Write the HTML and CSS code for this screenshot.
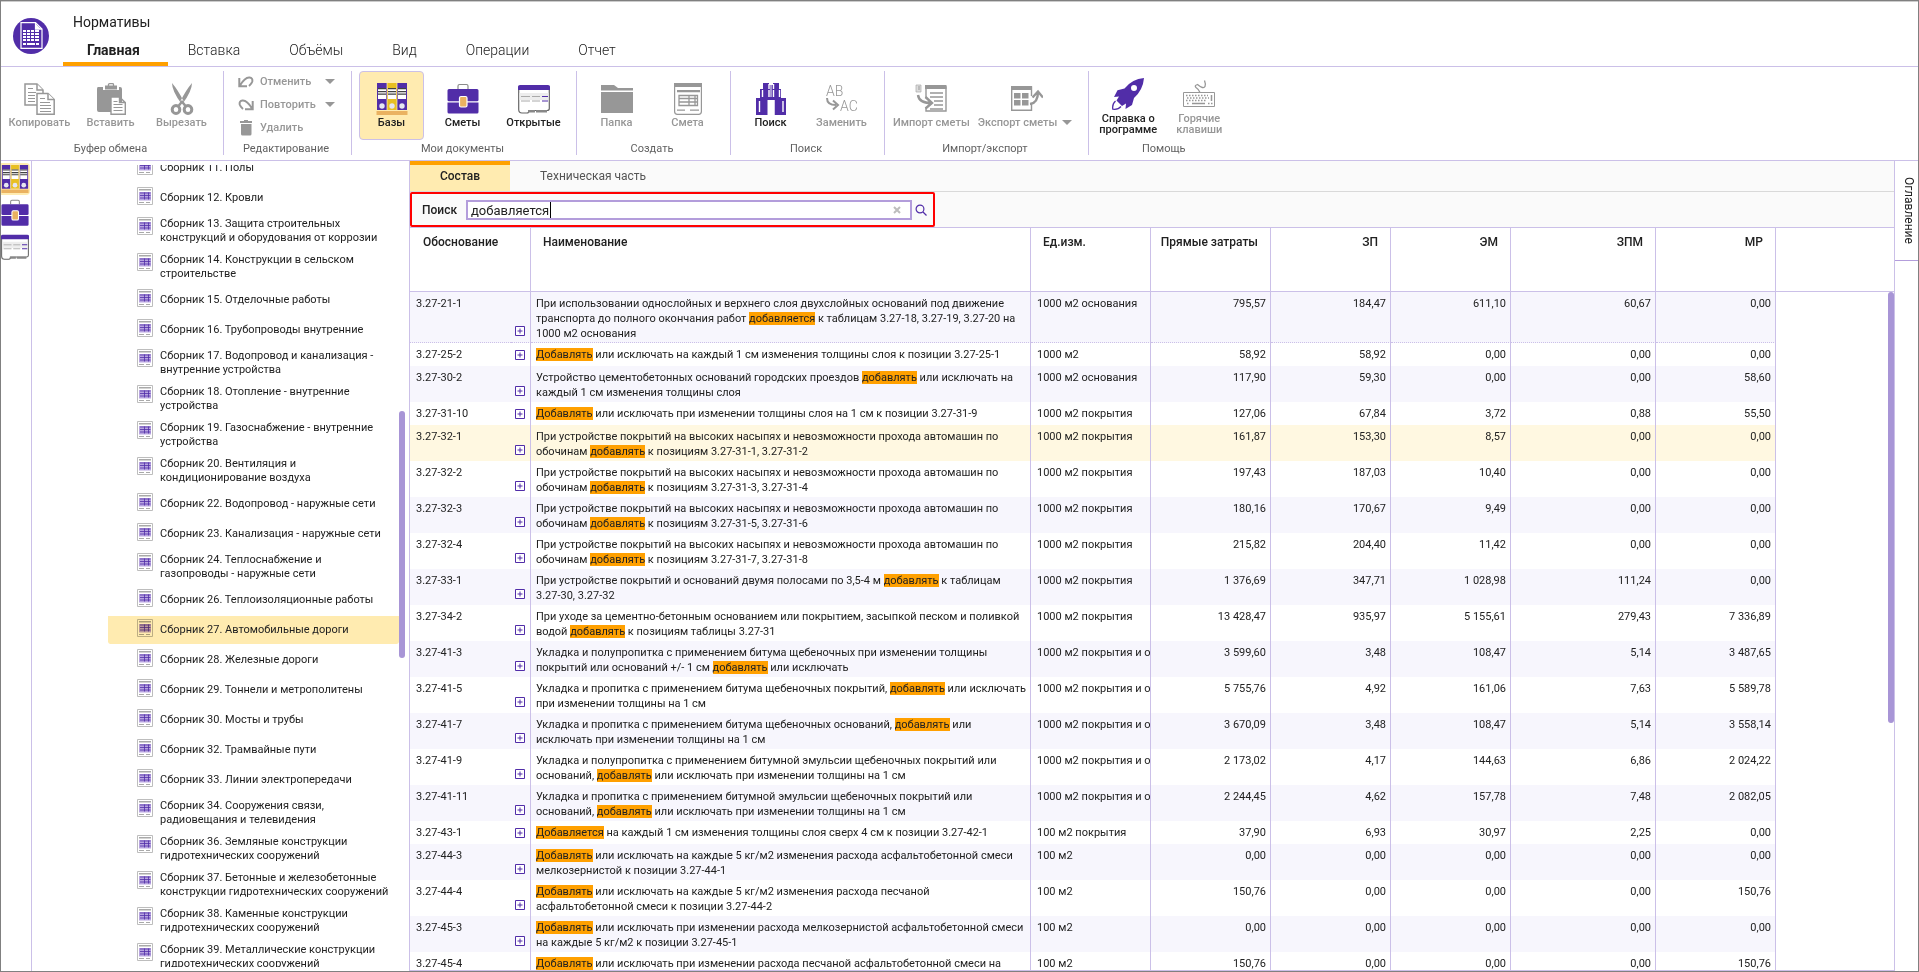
FILE: index.html
```
<!DOCTYPE html>
<html lang="ru">
<head>
<meta charset="utf-8">
<title>Нормативы</title>
<link rel="stylesheet" href="styles.css">
</head>
<body>
<svg class="sprite" aria-hidden="true">
  <symbol id="i-bases" viewBox="-1 0 32 32">
    <path fill="#512da8" d="M0 0h10v27H0zM20 0h10v27H20z"/>
    <path fill="#e8bf22" d="M10 0h10v27H10z"/>
    <path fill="#fff" d="M1 5h8v11H1zM11 5h8v11h-8zM21 5h8v11h-8z"/>
    <path stroke="#424242" stroke-width="1.3" d="M1 5.700h8M1 8.700h8M1 11.200h8M11 5.700h8M11 8.700h8M11 11.200h8M21 5.700h8M21 8.700h8M21 11.200h8"/>
    <path stroke="#fff1c8" stroke-width=".7" d="M10 0v27M20 0v27"/>
    <g fill="#e6e6f0"><circle cx="5" cy="23" r="2.700"/><circle cx="15" cy="23" r="2.700"/><circle cx="25" cy="23" r="2.700"/></g>
    <path fill="#eab261" d="M-.5 28h31v4h-31z"/>
  </symbol>
  <symbol id="i-case" viewBox="0 0 32 32">
    <path fill="none" stroke="#8a8a8a" stroke-width="1.2" d="M11 6V3q0-1.500 1.500-1.500h7Q21 1.500 21 3v3"/>
    <path fill="#512da8" d="M2 6h28q1.500 0 1.500 1.500V17q0 1.200-1.500 1.200H2Q.5 18.200.5 17V7.500Q.5 6 2 6zM.5 19.500h31V29q0 1.500-1.500 1.500H2Q.5 30.500.5 29z"/>
    <rect x="12.500" y="13.500" width="7.500" height="10.500" rx="1.500" fill="#eab261" stroke="#fff" stroke-width="1.200"/>
  </symbol>
  <symbol id="i-open" viewBox="0 0 32 32">
    <path fill="#fff" stroke="#666" stroke-width="1.200" d="M.7 4v22.500Q.7 30 4 30h5q2 0 2-2.500h18q2.300 0 2.300-2V4z"/>
    <path fill="#ededed" d="M1.500 10h29v7h-29z"/>
    <path fill="#512da8" d="M0 3.500Q0 2 2 2h28q2 0 2 1.500V7H0z"/>
    <path stroke="#aaa" d="M3 13.500h9M14 13.500h8M3 18h9M14 18h8"/>
    <path stroke="#512da8" stroke-width="1.200" d="M24 13.500h6M24 18h6"/>
    <path stroke="#888" stroke-width="2.500" d="M10 28.300h7M18 28.300h11"/>
  </symbol>
  <symbol id="i-copy" viewBox="0 0 32 32">
    <g fill="#fff" stroke="#979797" stroke-width="1.500"><path d="M1 1h12l6 6v15H1z"/><path d="M13 1v6h6"/><path d="M13 10.500h11l6.200 6v14.700H13z"/><path d="M24 10.500v6h6.200"/></g>
    <path stroke="#979797" stroke-width="1.200" d="M4 5.500h5M4 9.500h8M4 12.500h7M4 15.500h7M4 18.500h7M16 15.500h5M16 19.500h10M16 22.500h11M16 25.500h11M16 28.500h11"/>
  </symbol>
  <symbol id="i-paste" viewBox="0 0 32 32">
    <path fill="#979797" d="M3 4h5v3h16V4h1q2 0 2 2v23H4q-2 0-2-2V6q0-2 1-2z"/>
    <path fill="#979797" d="M10 2.500h12v4H10z"/><path fill="none" stroke="#979797" stroke-width="1.300" d="M13.500 3V1.500Q13.500.7 14.500.7h3q1 0 1 .8V3"/>
    <path fill="#fff" stroke="#979797" stroke-width="1.400" d="M16 14h8.500l5.800 5.500v11.700H16zM24.500 14v5.500h5.800"/>
    <path stroke="#979797" d="M18.500 18.500h4M18.500 21.500h9M18.500 24.500h9M18.500 27.500h9"/>
  </symbol>
  <symbol id="i-cut" viewBox="0 0 32 32">
    <path fill="#979797" d="M6 0q0 8 9.300 20.500l2.200-2.500Q12 7 6 0zM26 0q0 8-9.300 20.500l-2.200-2.500Q20 7 26 0z"/>
    <g fill="none" stroke="#979797" stroke-width="3"><ellipse cx="10" cy="26.500" rx="3.800" ry="4"/><ellipse cx="22" cy="26.500" rx="3.800" ry="4"/></g>
    <path stroke="#979797" stroke-width="2.500" d="M12.500 23l4-5M19.500 23l-4-5"/>
  </symbol>
  <symbol id="i-folder" viewBox="0 0 32 32"><path fill="#979797" d="M0 2h13l4 3h15v2.500H0zM0 9h32v21H0z"/></symbol>
  <symbol id="i-doc" viewBox="0 0 32 32">
    <path fill="#fff" stroke="#979797" stroke-width="1.200" d="M2.600 2v26.500q0 2.800 2.800 2.800h21.200q2.800 0 2.800-2.800V2z"/>
    <path fill="#979797" d="M2 0h28v4H2zM5 7h23v2.200H5zM5 26.500h8v1.200H5zM18 26.500h9v1.200h-9z"/>
    <path fill="none" stroke="#979797" stroke-width="1.300" d="M7 12.500h18.500v10H7zM7 15.500h18.500M7 19h18.500M17 12.500v10M23 12.500v10"/>
  </symbol>
  <symbol id="i-find" viewBox="0 0 32 32">
    <path fill="#512da8" d="M8 0h6v2h4V0h6v6h2v9h5v17H19.500V17h-7v15H1V15h4V6h3z"/>
    <path stroke="#fff" stroke-width="1.400" d="M14 1v5M18.500 1v5M7.500 7v7M14 7v7M18.500 7v7M24.500 7v7M4.500 18v11M28 18v11"/>
    <path fill="#fff" d="M13 17h6.500v15H13zM15.500 2h1v12h-1z"/><path stroke="#512da8" stroke-width="1.500" d="M11 5V2M21 5V2"/>
  </symbol>
  <symbol id="i-import" viewBox="0 0 32 32">
    <path fill="none" stroke="#979797" stroke-width="1.400" d="M11 15V4h20v24H11v-3"/><path fill="#979797" d="M10 2h21.500v4H10z"/>
    <path stroke="#979797" stroke-width="1.500" d="M15 10h13M15 14h13M19 18h9M19 22h9M15 26h13"/>
    <path fill="none" stroke="#979797" stroke-width="2.400" d="M3 12q1 8 13 8M10.500 14l6.500 6-6.500 5.500"/>
    <path fill="#ddd" stroke="#aaa" stroke-width=".7" d="M1 2h5v7H1z"/><path stroke="#888" stroke-width=".8" d="M3 4h2M3 6h2"/>
  </symbol>
  <symbol id="i-export" viewBox="0 0 32 32">
    <path fill="none" stroke="#979797" stroke-width="1.400" d="M20.500 13V4H.7v23.300h19.800V21"/><path fill="#979797" d="M0 3h21v4H0zM3 10h6.500v5.500H3zM11 10h6.500v5.500H11zM3 17h6.500v5.500H3zM11 17h6.500v5.500H11z"/>
    <path fill="none" stroke="#979797" stroke-width="2.400" d="M19 21q8-1 8-12M21.500 14.500L27 8.500l5 6"/>
  </symbol>
  <symbol id="i-rocket" viewBox="0 0 32 32">
    <path fill="#512da8" fill-rule="evenodd" d="M32 0Q20 1 12.500 10.500l-7 1.700L2 19l5-.5-2.500 4L10 28l4-2.500-.5 5.500 6.500-4 2-7Q31 12 32 0zM22 7a3 3 0 100 6 3 3 0 000-6z"/>
    <path fill="none" stroke="#512da8" stroke-width="1.300" d="M3.500 23Q0 26 .8 31.200 6 32 9 28.500"/>
  </symbol>
  <symbol id="i-keys" viewBox="0 0 32 32">
    <path fill="none" stroke="#979797" d="M.5 14.500h31v14H.5z"/><path fill="none" stroke="#979797" stroke-width="1.300" d="M17 14.500q-1-3-4-5-2-2 1.500-3 6 5 7.500 2 1-2-.5-6"/>
    <path fill="none" stroke="#979797" stroke-width="1.500" stroke-dasharray="1.500 1.500" d="M3 17.500h22M4 20h22M3 22.500h20M4 25.500h3M25 25.500h5"/><path stroke="#979797" stroke-width="1.500" d="M9 25.500h13M28.500 17v6"/>
  </symbol>
  <symbol id="i-undo" viewBox="0 0 16 16"><path fill="none" stroke="#979797" stroke-width="2" d="M1.300 4v8.200H9M2 11.500Q7 3 11.500 3.500 15 4 14.300 7.500 13.500 10 11 12"/></symbol>
  <symbol id="i-trash" viewBox="0 0 16 16"><path fill="#979797" d="M2 1h4V0h4v1h4v2H2zM3 4h10.500v10q0 1.500-1.500 1.500H4.500Q3 15.500 3 14z"/></symbol>
  <symbol id="i-book" viewBox="0 0 16 18">
    <path fill="#fff" stroke="#bdbdbd" d="M.5.5h15v17H.5z"/><path fill="#a9a9a9" d="M2 2h12v1.500H2zM2 15h5v1H2zM9 15h4v1H9z"/>
    <path fill="#b8a5e0" d="M2 5h12v8.500H2z"/><path fill="none" stroke="#512da8" stroke-width=".8" d="M3 6h10.500M3 8.500h10.500M3 11h10.500M7.500 5.500v7M11.500 5.500v7"/>
  </symbol>
  <symbol id="i-plus" viewBox="0 0 10 10"><path fill="#fff" stroke="#512da8" d="M.5.5h9v9h-9z"/><path stroke="#512da8" d="M2.500 5h5M5 2.500v5"/></symbol>
</svg>

<div class="window">
  <header class="header">
    <svg class="logo" viewBox="0 0 36 36" aria-hidden="true">
      <circle cx="18" cy="18" r="18" fill="#512da8"/>
      <path fill="none" stroke="#fff" stroke-width="1.200" d="M8 4.600h14.500l6.500 6.500v19.300H8zM22.500 4.600v6.500H29"/>
      <path fill="#fff" d="M10 12h16v11H10zM10 25h3v2h-3zM14 25h8v2h-8zM23 25h3v2h-3zM23 6l5 5h-5z"/>
      <path stroke="#512da8" d="M10 14.500h17M10 17.500h17M10 20.500h17M13.500 12v11M17.500 12v11M21.500 12v11"/>
    </svg>
    <div class="heading">
      <h1 class="title">Нормативы</h1>
      <nav class="tabs">
        <button class="tab tab-active">Главная</button><button class="tab">Вставка</button><button class="tab">Объёмы</button><button class="tab">Вид</button><button class="tab">Операции</button><button class="tab">Отчет</button>
      </nav>
    </div>
  </header>

  <div class="ribbon">
    <section class="group"><div class="tools">
      <button class="tool off"><svg><use href="#i-copy"/></svg><span>Копировать</span></button>
      <button class="tool off"><svg><use href="#i-paste"/></svg><span>Вставить</span></button>
      <button class="tool off"><svg><use href="#i-cut"/></svg><span>Вырезать</span></button>
    </div><p class="caption">Буфер обмена</p></section>
    <section class="group"><div class="edits">
      <button class="edit"><svg><use href="#i-undo"/></svg><span>Отменить</span><i class="caret"></i></button>
      <button class="edit redo"><svg><use href="#i-undo"/></svg><span>Повторить</span><i class="caret"></i></button>
      <button class="edit"><svg><use href="#i-trash"/></svg><span>Удалить</span></button>
    </div><p class="caption">Редактирование</p></section>
    <section class="group"><div class="tools">
      <button class="tool tool-active"><svg><use href="#i-bases"/></svg><span>Базы</span></button>
      <button class="tool"><svg><use href="#i-case"/></svg><span>Сметы</span></button>
      <button class="tool"><svg><use href="#i-open"/></svg><span>Открытые</span></button>
    </div><p class="caption">Мои документы</p></section>
    <section class="group"><div class="tools">
      <button class="tool off"><svg><use href="#i-folder"/></svg><span>Папка</span></button>
      <button class="tool off"><svg><use href="#i-doc"/></svg><span>Смета</span></button>
    </div><p class="caption">Создать</p></section>
    <section class="group"><div class="tools">
      <button class="tool"><svg><use href="#i-find"/></svg><span>Поиск</span></button>
      <button class="tool off"><svg viewBox="0 0 32 32"><text class="glyph-text" x="0" y="13">AB</text><text class="glyph-text" x="14" y="28">AC</text><path fill="none" stroke="#979797" stroke-width="2" d="M1 15q0 7 9 7M7 17.500l5 4.500-5 4.500"/></svg><span>Заменить</span></button>
    </div><p class="caption">Поиск</p></section>
    <section class="group"><div class="tools">
      <button class="tool off"><svg><use href="#i-import"/></svg><span>Импорт сметы</span></button>
      <button class="tool menu off"><svg><use href="#i-export"/></svg><span>Экспорт сметы<i class="caret"></i></span></button>
    </div><p class="caption">Импорт/экспорт</p></section>
    <section class="group"><div class="tools">
      <button class="tool tall"><svg><use href="#i-rocket"/></svg><span>Справка о<br>программе</span></button>
      <button class="tool tall off"><svg><use href="#i-keys"/></svg><span>Горячие<br>клавиши</span></button>
    </div><p class="caption">Помощь</p></section>
  </div>

  <div class="body">
    <aside class="rail">
      <button class="rail-item rail-active" aria-label="Базы"><svg><use href="#i-bases"/></svg></button>
      <button class="rail-item" aria-label="Сметы"><svg><use href="#i-case"/></svg></button>
      <button class="rail-item" aria-label="Открытые"><svg><use href="#i-open"/></svg></button>
    </aside>

    <div class="tree">
      <ul class="tree-list">
        <li><svg><use href="#i-book"/></svg><span>Сборник 11. Полы</span></li>
        <li><svg><use href="#i-book"/></svg><span>Сборник 12. Кровли</span></li>
        <li><svg><use href="#i-book"/></svg><span>Сборник 13. Защита строительных<br>конструкций и оборудования от коррозии</span></li>
        <li><svg><use href="#i-book"/></svg><span>Сборник 14. Конструкции в сельском<br>строительстве</span></li>
        <li><svg><use href="#i-book"/></svg><span>Сборник 15. Отделочные работы</span></li>
        <li><svg><use href="#i-book"/></svg><span>Сборник 16. Трубопроводы внутренние</span></li>
        <li><svg><use href="#i-book"/></svg><span>Сборник 17. Водопровод и канализация -<br>внутренние устройства</span></li>
        <li><svg><use href="#i-book"/></svg><span>Сборник 18. Отопление - внутренние<br>устройства</span></li>
        <li><svg><use href="#i-book"/></svg><span>Сборник 19. Газоснабжение - внутренние<br>устройства</span></li>
        <li><svg><use href="#i-book"/></svg><span>Сборник 20. Вентиляция и<br>кондиционирование воздуха</span></li>
        <li><svg><use href="#i-book"/></svg><span>Сборник 22. Водопровод - наружные сети</span></li>
        <li><svg><use href="#i-book"/></svg><span>Сборник 23. Канализация - наружные сети</span></li>
        <li><svg><use href="#i-book"/></svg><span>Сборник 24. Теплоснабжение и<br>газопроводы - наружные сети</span></li>
        <li><svg><use href="#i-book"/></svg><span>Сборник 26. Теплоизоляционные работы</span></li>
        <li class="selected"><svg><use href="#i-book"/></svg><span>Сборник 27. Автомобильные дороги</span></li>
        <li><svg><use href="#i-book"/></svg><span>Сборник 28. Железные дороги</span></li>
        <li><svg><use href="#i-book"/></svg><span>Сборник 29. Тоннели и метрополитены</span></li>
        <li><svg><use href="#i-book"/></svg><span>Сборник 30. Мосты и трубы</span></li>
        <li><svg><use href="#i-book"/></svg><span>Сборник 32. Трамвайные пути</span></li>
        <li><svg><use href="#i-book"/></svg><span>Сборник 33. Линии электропередачи</span></li>
        <li><svg><use href="#i-book"/></svg><span>Сборник 34. Сооружения связи,<br>радиовещания и телевидения</span></li>
        <li><svg><use href="#i-book"/></svg><span>Сборник 36. Земляные конструкции<br>гидротехнических сооружений</span></li>
        <li><svg><use href="#i-book"/></svg><span>Сборник 37. Бетонные и железобетонные<br>конструкции гидротехнических сооружений</span></li>
        <li><svg><use href="#i-book"/></svg><span>Сборник 38. Каменные конструкции<br>гидротехнических сооружений</span></li>
        <li><svg><use href="#i-book"/></svg><span>Сборник 39. Металлические конструкции<br>гидротехнических сооружений</span></li>
      </ul>
      <div class="thumb thumb-tree"></div>
    </div>

    <main class="panel">
      <div class="subtabs">
        <button class="subtab subtab-active">Состав</button>
        <button class="subtab">Техническая часть</button>
      </div>
      <div class="searchbar">
        <form class="search">
          <label for="q">Поиск</label>
          <div class="field"><input id="q" type="text" value="добавляется"><button class="clear" type="button" aria-label="Очистить"><svg viewBox="0 0 8 8"><path d="M1 1l6 6M7 1L1 7"/></svg></button><span class="cursor"></span></div>
          <button class="go" type="button" aria-label="Найти"><svg viewBox="0 0 12 12"><circle cx="5" cy="5" r="3.900"/><path d="M8 8l3.500 3.500"/></svg></button>
        </form>
      </div>
      <div class="grid">
        <div class="grid-head">
          <table>
            <colgroup><col class="c-code"><col class="c-exp"><col class="c-name"><col class="c-num"><col class="c-num"><col class="c-num"><col class="c-num"><col class="c-wide"><col class="c-last"><col></colgroup>
            <thead><tr><th colspan="2">Обоснование</th><th>Наименование</th><th>Ед.изм.</th><th class="r">Прямые затраты</th><th class="r">ЗП</th><th class="r">ЭМ</th><th class="r">ЗПМ</th><th class="r">МР</th><th class="rest"></th></tr></thead>
          </table>
        </div>
        <div class="grid-body">
          <table>
            <colgroup><col class="c-code"><col class="c-exp"><col class="c-name"><col class="c-num"><col class="c-num"><col class="c-num"><col class="c-num"><col class="c-wide"><col class="c-last"></colgroup>
            <tbody>
            <tr class="focus"><td>3.27-21-1</td><td><button aria-label="Раскрыть"><svg><use href="#i-plus"/></svg></button></td><td>При использовании однослойных и верхнего слоя двухслойных оснований под движение транспорта до полного окончания работ <mark>добавляется</mark> к таблицам 3.27-18, 3.27-19, 3.27-20 на 1000 м2 основания</td><td>1000 м2 основания</td><td>795,57</td><td>184,47</td><td>611,10</td><td>60,67</td><td>0,00</td></tr>
            <tr><td>3.27-25-2</td><td><button aria-label="Раскрыть"><svg><use href="#i-plus"/></svg></button></td><td><mark>Добавлять</mark> или исключать на каждый 1 см изменения толщины слоя к позиции 3.27-25-1</td><td>1000 м2</td><td>58,92</td><td>58,92</td><td>0,00</td><td>0,00</td><td>0,00</td></tr>
            <tr><td>3.27-30-2</td><td><button aria-label="Раскрыть"><svg><use href="#i-plus"/></svg></button></td><td>Устройство цементобетонных оснований городских проездов <mark>добавлять</mark> или исключать на каждый 1 см изменения толщины слоя</td><td>1000 м2 основания</td><td>117,90</td><td>59,30</td><td>0,00</td><td>0,00</td><td>58,60</td></tr>
            <tr><td>3.27-31-10</td><td><button aria-label="Раскрыть"><svg><use href="#i-plus"/></svg></button></td><td><mark>Добавлять</mark> или исключать при изменении толщины слоя на 1 см к позиции 3.27-31-9</td><td>1000 м2 покрытия</td><td>127,06</td><td>67,84</td><td>3,72</td><td>0,88</td><td>55,50</td></tr>
            <tr class="current"><td>3.27-32-1</td><td><button aria-label="Раскрыть"><svg><use href="#i-plus"/></svg></button></td><td>При устройстве покрытий на высоких насыпях и невозможности прохода автомашин по обочинам <mark>добавлять</mark> к позициям 3.27-31-1, 3.27-31-2</td><td>1000 м2 покрытия</td><td>161,87</td><td>153,30</td><td>8,57</td><td>0,00</td><td>0,00</td></tr>
            <tr><td>3.27-32-2</td><td><button aria-label="Раскрыть"><svg><use href="#i-plus"/></svg></button></td><td>При устройстве покрытий на высоких насыпях и невозможности прохода автомашин по обочинам <mark>добавлять</mark> к позициям 3.27-31-3, 3.27-31-4</td><td>1000 м2 покрытия</td><td>197,43</td><td>187,03</td><td>10,40</td><td>0,00</td><td>0,00</td></tr>
            <tr><td>3.27-32-3</td><td><button aria-label="Раскрыть"><svg><use href="#i-plus"/></svg></button></td><td>При устройстве покрытий на высоких насыпях и невозможности прохода автомашин по обочинам <mark>добавлять</mark> к позициям 3.27-31-5, 3.27-31-6</td><td>1000 м2 покрытия</td><td>180,16</td><td>170,67</td><td>9,49</td><td>0,00</td><td>0,00</td></tr>
            <tr><td>3.27-32-4</td><td><button aria-label="Раскрыть"><svg><use href="#i-plus"/></svg></button></td><td>При устройстве покрытий на высоких насыпях и невозможности прохода автомашин по обочинам <mark>добавлять</mark> к позициям 3.27-31-7, 3.27-31-8</td><td>1000 м2 покрытия</td><td>215,82</td><td>204,40</td><td>11,42</td><td>0,00</td><td>0,00</td></tr>
            <tr><td>3.27-33-1</td><td><button aria-label="Раскрыть"><svg><use href="#i-plus"/></svg></button></td><td>При устройстве покрытий и оснований двумя полосами по 3,5-4 м <mark>добавлять</mark> к таблицам 3.27-30, 3.27-32</td><td>1000 м2 покрытия</td><td>1 376,69</td><td>347,71</td><td>1 028,98</td><td>111,24</td><td>0,00</td></tr>
            <tr><td>3.27-34-2</td><td><button aria-label="Раскрыть"><svg><use href="#i-plus"/></svg></button></td><td>При уходе за цементно-бетонным основанием или покрытием, засыпкой песком и поливкой водой <mark>добавлять</mark> к позициям таблицы 3.27-31</td><td>1000 м2 покрытия</td><td>13 428,47</td><td>935,97</td><td>5 155,61</td><td>279,43</td><td>7 336,89</td></tr>
            <tr><td>3.27-41-3</td><td><button aria-label="Раскрыть"><svg><use href="#i-plus"/></svg></button></td><td>Укладка и полупропитка с применением битума щебеночных при изменении толщины покрытий или оснований +/- 1 см <mark>добавлять</mark> или исключать</td><td>1000 м2 покрытия и основания</td><td>3 599,60</td><td>3,48</td><td>108,47</td><td>5,14</td><td>3 487,65</td></tr>
            <tr><td>3.27-41-5</td><td><button aria-label="Раскрыть"><svg><use href="#i-plus"/></svg></button></td><td>Укладка и пропитка с применением битума щебеночных покрытий, <mark>добавлять</mark> или исключать при изменении толщины на 1 см</td><td>1000 м2 покрытия и основания</td><td>5 755,76</td><td>4,92</td><td>161,06</td><td>7,63</td><td>5 589,78</td></tr>
            <tr><td>3.27-41-7</td><td><button aria-label="Раскрыть"><svg><use href="#i-plus"/></svg></button></td><td>Укладка и пропитка с применением битума щебеночных оснований, <mark>добавлять</mark> или исключать при изменении толщины на 1 см</td><td>1000 м2 покрытия и основания</td><td>3 670,09</td><td>3,48</td><td>108,47</td><td>5,14</td><td>3 558,14</td></tr>
            <tr><td>3.27-41-9</td><td><button aria-label="Раскрыть"><svg><use href="#i-plus"/></svg></button></td><td>Укладка и полупропитка с применением битумной эмульсии щебеночных покрытий или оснований, <mark>добавлять</mark> или исключать при изменении толщины на 1 см</td><td>1000 м2 покрытия и основания</td><td>2 173,02</td><td>4,17</td><td>144,63</td><td>6,86</td><td>2 024,22</td></tr>
            <tr><td>3.27-41-11</td><td><button aria-label="Раскрыть"><svg><use href="#i-plus"/></svg></button></td><td>Укладка и пропитка с применением битумной эмульсии щебеночных покрытий или оснований, <mark>добавлять</mark> или исключать при изменении толщины на 1 см</td><td>1000 м2 покрытия и основания</td><td>2 244,45</td><td>4,62</td><td>157,78</td><td>7,48</td><td>2 082,05</td></tr>
            <tr><td>3.27-43-1</td><td><button aria-label="Раскрыть"><svg><use href="#i-plus"/></svg></button></td><td><mark>Добавляется</mark> на каждый 1 см изменения толщины слоя сверх 4 см к позиции 3.27-42-1</td><td>100 м2 покрытия</td><td>37,90</td><td>6,93</td><td>30,97</td><td>2,25</td><td>0,00</td></tr>
            <tr><td>3.27-44-3</td><td><button aria-label="Раскрыть"><svg><use href="#i-plus"/></svg></button></td><td><mark>Добавлять</mark> или исключать на каждые 5 кг/м2 изменения расхода асфальтобетонной смеси мелкозернистой к позиции 3.27-44-1</td><td>100 м2</td><td>0,00</td><td>0,00</td><td>0,00</td><td>0,00</td><td>0,00</td></tr>
            <tr><td>3.27-44-4</td><td><button aria-label="Раскрыть"><svg><use href="#i-plus"/></svg></button></td><td><mark>Добавлять</mark> или исключать на каждые 5 кг/м2 изменения расхода песчаной асфальтобетонной смеси к позиции 3.27-44-2</td><td>100 м2</td><td>150,76</td><td>0,00</td><td>0,00</td><td>0,00</td><td>150,76</td></tr>
            <tr><td>3.27-45-3</td><td><button aria-label="Раскрыть"><svg><use href="#i-plus"/></svg></button></td><td><mark>Добавлять</mark> или исключать при изменении расхода мелкозернистой асфальтобетонной смеси на каждые 5 кг/м2 к позиции 3.27-45-1</td><td>100 м2</td><td>0,00</td><td>0,00</td><td>0,00</td><td>0,00</td><td>0,00</td></tr>
            <tr><td>3.27-45-4</td><td><button aria-label="Раскрыть"><svg><use href="#i-plus"/></svg></button></td><td><mark>Добавлять</mark> или исключать при изменении расхода песчаной асфальтобетонной смеси на каждые 5 кг/м2 к позиции 3.27-45-2</td><td>100 м2</td><td>150,76</td><td>0,00</td><td>0,00</td><td>0,00</td><td>150,76</td></tr>
            </tbody>
          </table>
          <div class="thumb thumb-grid"></div>
        </div>
      </div>
    </main>

    <aside class="contents"><button>Оглавление</button></aside>
  </div>
</div>
</body>
</html>
```

FILE: styles.css
```
* { box-sizing: border-box; }
html, body { height: 100%; margin: 0; }
body { font: 12px/14px Roboto, sans-serif; color: #212121; background: #fff; overflow: hidden; }
button { margin: 0; padding: 0; border: 0; background: none; font: inherit; color: inherit; }
svg { display: block; flex: none; }
.sprite { position: absolute; width: 0; height: 0; }
.glyph-text { font-size: 14px; font-weight: 300; fill: #979797; }

.window { display: flex; flex-direction: column; height: 100vh; border: 1px solid #808080; }

.header { display: flex; flex: none; height: 66px; border-bottom: 1px solid #cbc0e8; box-shadow: inset 0 2px 0 -1px #ccc; }
.logo { width: 36px; height: 36px; margin: 17px 14px 0 12px; }
.heading { display: flex; flex-direction: column; justify-content: space-between; }
.title { margin: 11px 0 0 10px; font-size: 14px; line-height: 20px; font-weight: 400; }
.tabs { display: flex; }
.tab { height: 30px; padding: 6px 25px 4px 24px; font-size: 14px; line-height: 16px; font-weight: 300; border-bottom: 4px solid transparent; }
.tab-active { padding-right: 28px; margin-right: -4px; font-weight: 700; border-color: #ffa000; }

.ribbon { display: flex; flex: none; height: 94px; padding: 4px 0 5px; border-bottom: 1px solid #cbc0e8; font-size: 11px; }
.group { display: flex; flex-direction: column; justify-content: space-between; padding: 0 10px 0 7px; border-right: 1px solid #cbc0e8; }
.group:first-child { padding: 0 9px 0 6px; }
.group:last-child { border: 0; }
.tools { display: flex; gap: 6px; }
.tool { display: flex; flex-direction: column; align-items: center; min-width: 65px; height: 69px; padding-top: 11px; border: 1px solid transparent; border-radius: 4px; line-height: 16px; font-weight: 500; white-space: nowrap; }
.tool svg { width: 32px; height: 32px; }
.tool-active { background: #ffebb0; border-color: #cbc0e8; }
.tall { padding-top: 6px; line-height: 11px; }
.tall span { margin-top: 3px; }
.menu { min-width: 101px; }
.menu span { align-self: flex-start; }
.menu .caret { margin-left: 5px; }
.off, .edit { color: #979797; }
.caption { margin: 0; text-align: center; line-height: 13px; color: #616161; }
.edits { display: flex; flex-direction: column; padding: 0 6px 0 7px; }
.edit { display: grid; grid-template-columns: 16px 59px 10px; gap: 6px; align-items: center; height: 23px; padding-bottom: 2px; font-weight: 500; text-align: left; }
.edit svg { width: 16px; height: 16px; }
.redo svg { transform: scaleX(-1); }
.caret { display: inline-block; border: 5px solid transparent; border-top-color: #979797; border-bottom: 0; vertical-align: 1px; }

.body { display: flex; flex: 1; min-height: 0; }
.rail { flex: none; width: 31px; padding-top: 2px; border-right: 1px solid #cbc0e8; }
.rail-item { display: block; width: 29px; height: 32px; margin-bottom: 2px; border-radius: 0 4px 4px 0; }
.rail-item svg { width: 28px; height: 28px; }
.rail-active { background: #ffebb0; }

.tree { position: relative; flex: none; width: 377px; padding-left: 76px; margin: 4px 0; overflow: hidden; font-size: 11px; }
.tree-list { width: 291px; margin: -13px 0 0; padding: 0; list-style: none; }
.tree-list li { display: flex; gap: 7px; min-height: 30px; padding: 3px 0 3px 29px; border-top: 2px solid transparent; border-radius: 2px; background-clip: padding-box; white-space: nowrap; }
.tree-list span { align-self: center; }
.tree-list svg { width: 16px; height: 18px; }
.tree-list .selected { background-color: #ffebb0; }
.selected svg { mix-blend-mode: multiply; }
.thumb { position: absolute; width: 6px; border-radius: 3px; background: #a895d6; }
.thumb-tree { right: 4px; top: 246px; height: 247px; }

.panel { display: flex; flex: 1; flex-direction: column; min-width: 0; border: solid #cbc0e8; border-width: 0 1px 1px; }
.subtabs { display: flex; flex: none; height: 31px; background: #fafafa; border-bottom: 1px solid #d9d9d9; }
.subtab { padding: 0 30px; font-weight: 400; color: #555; }
.subtab-active { min-width: 100px; padding: 0 0 4px; border-top: 4px solid #ffa000; background: #ffebb0; color: #212121; font-weight: 500; }
.searchbar { flex: none; height: 35px; background: #fafafa; }
.search { display: flex; align-items: center; width: 525px; height: 35px; padding-left: 10px; border: 2px solid #f00; border-radius: 2px; }
.search label { width: 44px; font-weight: 500; }
.field { position: relative; flex: 1; height: 20px; }
.field input { display: block; width: 100%; height: 20px; padding: 1px 24px 0 3px; border: 2px solid #b39ddb; font: 13px/15px Roboto, sans-serif; color: #212121; outline: 0; }
.cursor { position: absolute; left: 84px; top: 2px; width: 1px; height: 16px; background: #000; }
.clear { position: absolute; right: 11px; top: 6px; }
.clear svg { width: 8px; height: 8px; stroke: #bdbdbd; stroke-width: 2; }
.go { margin: 0 6px 0 3px; }
.go svg { width: 12px; height: 12px; fill: none; stroke: #512da8; stroke-width: 1.2; }

.grid { display: flex; flex: 1; flex-direction: column; min-height: 0; border-top: 1px solid #cbc0e8; }
.grid-head { flex: none; border-bottom: 1px solid #cbc0e8; }
.grid-body { position: relative; flex: 1; min-height: 0; overflow: hidden; }
table { table-layout: fixed; border-collapse: separate; border-spacing: 0; }
.grid-head table { width: 100%; }
.grid-body table { width: 1366px; font-size: 11px; line-height: 15px; }
.c-code { width: 101px; }
.c-exp { width: 20px; }
.c-name { width: 500px; }
.c-num { width: 120px; }
.c-wide { width: 145px; }
.c-last { width: 120px; }
th { height: 63px; padding: 7px 12px 7px 13px; vertical-align: top; text-align: left; font-weight: 500; border-right: 1px solid #cbc0e8; white-space: nowrap; }
th:nth-child(2), th:nth-child(3) { padding-left: 12px; }
th.r { padding: 7px 12px 7px 6px; text-align: right; }
th.rest { border: 0; }
td { height: 23px; padding: 4px 4px 2px 6px; vertical-align: top; text-align: right; border-right: 1px solid #cbc0e8; white-space: nowrap; overflow: hidden; }
.focus td { border-bottom: 1px dotted #cbc0e8; padding-bottom: 1px; }
td:nth-child(1), td:nth-child(3), td:nth-child(4) { text-align: left; }
td:nth-child(1) { border-right: 0; }
td:nth-child(3) { white-space: normal; padding-left: 5px; padding-right: 3px; }
td:nth-child(4) { padding-right: 0; }
tr td:nth-child(2) { vertical-align: bottom; padding: 0 5px 6px 0; }
td button { display: block; margin-left: auto; }
td svg { width: 10px; height: 10px; }
tbody tr:nth-child(odd) { background: #f7f6fd; }
tbody .current.current { background: #fff8e1; }
mark { background: #ffa000; color: inherit; }
.thumb-grid { right: 0; top: 0; height: 431px; }

.contents { flex: none; width: 23px; }
.contents button { display: flex; align-items: center; justify-content: center; width: 100%; height: 100px; padding-left: 5px; border-bottom: 1px solid #b39ddb; writing-mode: vertical-rl; }
```
